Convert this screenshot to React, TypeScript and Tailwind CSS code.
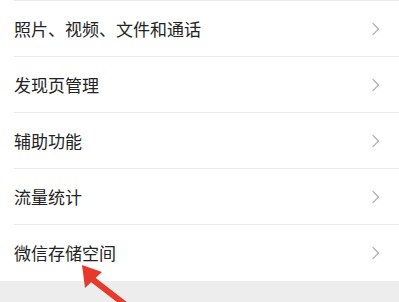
const ITEMS = ["照片、视频、文件和通话", "发现页管理", "辅助功能", "流量统计", "微信存储空间"];

function Chevron() {
  return (
    <svg width="10" height="16" viewBox="0 0 10 16" aria-hidden>
      <path d="M2 2.5 L7.5 8 L2 13.5" fill="none" stroke="#b8b8b8" strokeWidth="1.5" strokeLinecap="round" strokeLinejoin="round" />
    </svg>
  );
}

export default function App() {
  return (
    <div
      className="relative h-[302px] w-[399px] overflow-hidden bg-[#ededed]"
      style={{ fontFamily: '"Noto Sans CJK SC", "Noto Sans", sans-serif' }}
    >
      <div className="bg-white">
        <div className="ml-[14px] h-px bg-[#ececec]" />
        {ITEMS.map((label, i) => (
          <div key={label}>
            <div className="flex h-[55px] items-center justify-between pl-[14px] pr-[18px]">
              <span className="text-[17px] leading-none text-[#222]">{label}</span>
              <Chevron />
            </div>
            {i < ITEMS.length - 1 ? <div className="ml-[14px] h-px bg-[#ececec]" /> : <div className="h-px" />}
          </div>
        ))}
      </div>

      {/* red pointer arrow */}
      <svg className="pointer-events-none absolute left-0 top-0" width="399" height="302" aria-hidden>
        <line x1="92" y1="279" x2="127" y2="306" stroke="#e63a2c" strokeWidth="6" />
        <polygon points="82,265 85,288 102,272" fill="#e63a2c" />
      </svg>
    </div>
  );
}
